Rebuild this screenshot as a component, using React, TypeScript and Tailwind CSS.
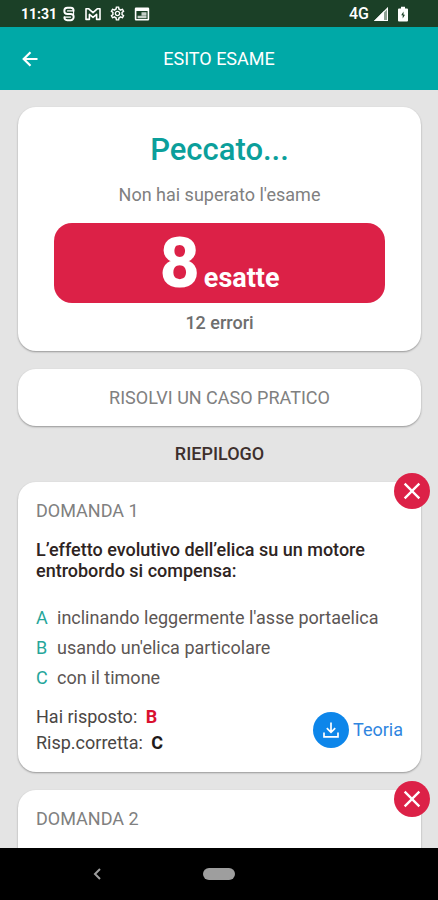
import { ReactNode } from 'react';
import { MdClose, MdOutlineSettings } from 'react-icons/md';

type Answer = {
    letter: string;
    text: string;
}

type Question = {
    id: number;
    text?: string;
    answers?: Answer[];
    given?: string;
    correct?: string;
}

const questions: Question[] = [
    {
        id: 1,
        text: 'L’effetto evolutivo dell’elica su un motore entrobordo si compensa:',
        answers: [
            { letter: 'A', text: "inclinando leggermente l'asse portaelica" },
            { letter: 'B', text: "usando un'elica particolare" },
            { letter: 'C', text: 'con il timone' },
        ],
        given: 'B',
        correct: 'C',
    },
    { id: 2 },
];

const StatusBar = () => (
    <div className="flex h-[27px] shrink-0 items-center justify-between bg-[#1b4027] pl-[21px] pr-[29px] font-medium text-white">
        <div className="flex items-center gap-1">
            <span className="text-sm font-bold">11:31</span>
            <div className="flex items-center gap-2">
                <svg className="size-4" viewBox="0 0 16 16" fill="none" stroke="currentColor" strokeLinecap="round">
                    <path d="M12.6 4.8A3 3 0 0 0 9.8 1.8H6.4a3.1 3.1 0 0 0 0 6.2h3.2a3.1 3.1 0 0 1 0 6.2H6.2a3 3 0 0 1-2.8-3" strokeWidth="1.9" />
                    <path d="M6.5 4.9h6M3.6 11.1h6M12.6 5v3.6" strokeWidth="1.1" />
                </svg>
                <svg className="size-4" viewBox="0 0 16 16" fill="none" stroke="currentColor" strokeWidth="1.6" strokeLinejoin="round">
                    <path d="M1 13.4V2.8h2.8L8 6.6l4.2-3.8H15v10.6h-3.4V8.4L8 11.4 4.4 8.4v5z" />
                </svg>
                <MdOutlineSettings className="size-[17px]" />
                <svg className="size-4" viewBox="0 0 16 16" fill="currentColor">
                    <path fillRule="evenodd" d="M2 1.5h12a1.2 1.2 0 0 1 1.2 1.2v10.6a1.2 1.2 0 0 1-1.2 1.2H2A1.2 1.2 0 0 1 .8 13.3V2.7A1.2 1.2 0 0 1 2 1.5zM2.4 5v8h11.2V5z" />
                    <path d="M7.5 6.2h5v3.2h-5zM3.6 9.8h8.9v2.4H3.6z" opacity=".75" />
                </svg>
            </div>
        </div>
        <div className="flex items-center gap-1">
            <span className="text-base">4G</span>
            <svg className="size-4" viewBox="0 0 16 16" fill="currentColor">
                <path d="M15 1v14H1z" opacity=".5" />
                <path d="M11 5v10H1z" />
                <path d="M15 1v14H1L15 1zm-1 2.4L3.4 14H14z" />
            </svg>
            <svg className="ml-1 h-4 w-3" viewBox="0 0 12 16">
                <path fill="currentColor" d="M4 .8h4v1.6h2a1 1 0 0 1 1 1v11a1 1 0 0 1-1 1H2a1 1 0 0 1-1-1v-11a1 1 0 0 1 1-1h2z" />
                <path fill="#1b4027" d="M6.5 5.5 4.2 9.300h1.500v3.200L8 8.700H6.500z" />
            </svg>
        </div>
    </div>
);

const Card = ({ children, className = '' }: { children: ReactNode; className?: string }) => (
    <section className={`relative shrink-0 rounded-[18px] bg-white shadow-[0_1px_2px_rgba(0,0,0,0.35)] ${className}`}>
        {children}
    </section>
);

const QuestionCard = ({ question }: { question: Question }) => (
    <Card className="min-h-32 px-[18px] pb-4 pt-[17px]">
        <span className="absolute -right-[9px] -top-[9px] flex size-9 items-center justify-center rounded-full bg-[#dc2147] text-white">
            <MdClose className="size-7" />
        </span>
        <h3 className="text-lg leading-6 text-[#808080]">DOMANDA {question.id}</h3>
        {question.text && (
            <p className="mt-4 text-lg font-medium leading-[21px] text-[#2e2422]">{question.text}</p>
        )}
        {question.answers && (
            <ul className="mt-[22px]">
                {question.answers.map(({ letter, text }) => (
                    <li key={letter} className="flex text-lg leading-[30px] text-[#5c5654]">
                        <span className="w-[21px] text-[#26a69a]">{letter}</span>
                        {text}
                    </li>
                ))}
            </ul>
        )}
        {question.given && (
            <div className="mt-[11px] flex items-center justify-between text-lg leading-[26px] text-[#4a4644]">
                <div>
                    <p>Hai risposto: <b className="ml-1 text-[#d9102f]">{question.given}</b></p>
                    <p>Risp.corretta: <b className="ml-1 text-[#211a19]">{question.correct}</b></p>
                </div>
                <a href="#teoria" className="flex items-center gap-1 text-[#2f86e0]">
                    <span className="flex size-9 items-center justify-center rounded-full bg-[#0d86ea] text-white">
                        <svg className="size-[18px]" viewBox="0 0 18 18" fill="none" stroke="currentColor" strokeWidth="1.7">
                            <path d="M9 1.5V11M4.8 7.2 9 11.4l4.2-4.2M2 11.5v4.3h14v-4.3" />
                        </svg>
                    </span>
                    Teoria
                </a>
            </div>
        )}
    </Card>
);

export default function App() {
    return (
        <div className="flex h-screen flex-col bg-[#e4e4e4] font-[Roboto,sans-serif]">
            <StatusBar />
            <header className="grid h-[63px] shrink-0 grid-cols-[1fr_auto_1fr] items-center bg-[#00a9a7] px-[22px] text-white">
                <button aria-label="Indietro" className="w-fit">
                    <svg className="size-4" viewBox="0 0 16 16" fill="none" stroke="currentColor" strokeWidth="2.2">
                        <path d="M15.5 8H2M8.500 1.200 1.700 8l6.800 6.800" />
                    </svg>
                </button>
                <h1 className="text-lg">ESITO ESAME</h1>
            </header>

            <main className="flex min-h-0 flex-1 flex-col gap-[18px] overflow-hidden pl-[18px] pr-[17px] pt-[17px]">
                <Card className="px-9 pb-4 pt-6 text-center">
                    <h2 className="text-[31px] font-medium leading-[38px] text-[#0b9f9b]">Peccato...</h2>
                    <p className="mt-[14px] text-lg leading-6 text-[#808080]">Non hai superato l'esame</p>
                    <p className="mt-4 flex h-20 items-baseline justify-center gap-1 rounded-[18px] bg-[#dc2147] font-bold text-white">
                        <span className="text-[70px] font-extrabold leading-[80px]">8</span>
                        <span className="text-[27px]">esatte</span>
                    </p>
                    <p className="mt-2 text-lg font-medium leading-6 text-[#6e6e6e]">12 errori</p>
                </Card>

                <button className="h-[57px] shrink-0 rounded-[18px] bg-white text-lg text-[#808080] shadow-[0_1px_2px_rgba(0,0,0,0.35)]">
                    RISOLVI UN CASO PRATICO
                </button>

                <h2 className="text-center text-lg font-medium leading-5 text-[#3d2f2d]">RIEPILOGO</h2>

                {questions.map((question) => (
                    <QuestionCard key={question.id} question={question} />
                ))}
            </main>

            <nav className="z-10 grid h-[52px] shrink-0 grid-cols-[1fr_auto_1fr] items-center bg-black text-[#9e9e9e]">
                <button aria-label="Indietro di sistema" className="mr-[10px] justify-self-center">
                    <svg className="h-3 w-2" viewBox="0 0 8 12" fill="none" stroke="currentColor" strokeWidth="2">
                        <path d="M7 1 2 6l5 5" />
                    </svg>
                </button>
                <button aria-label="Home" className="h-3 w-8 rounded-full bg-[#9e9e9e]" />
            </nav>
        </div>
    );
}
